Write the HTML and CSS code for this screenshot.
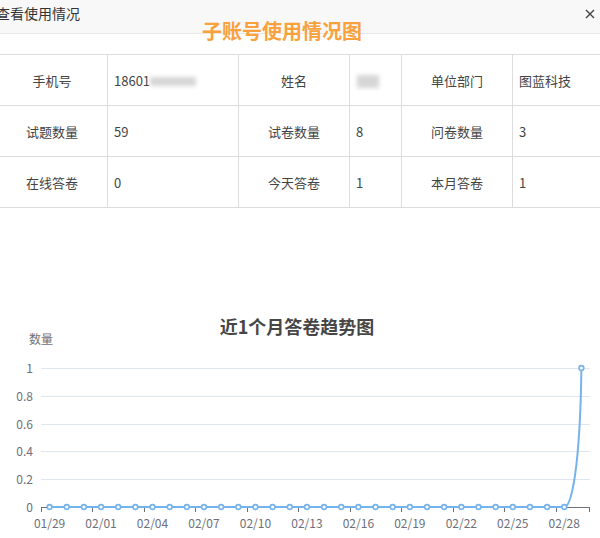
FILE: index.html
```html
<!DOCTYPE html>
<html lang="zh-CN">
<head>
    <meta charset="UTF-8">
    <title>查看使用情况</title>
    <link rel="stylesheet" href="styles.css">
</head>
<body>
    <div class="dialog">
        <div class="dialog-header">
            <span class="dialog-title">查看使用情况</span>
            <button class="close-btn" aria-label="关闭">
                <svg width="10" height="10" viewBox="0 0 10 10"><path d="M1 1 L9 9 M9 1 L1 9" stroke="#444" stroke-width="1.4" fill="none"/></svg>
            </button>
        </div>

        <h2 class="usage-title">子账号使用情况图</h2>

        <table class="usage-table">
            <colgroup>
                <col style="width:111px"><col style="width:131px"><col style="width:111px">
                <col style="width:52px"><col style="width:111px"><col style="width:88px">
            </colgroup>
            <tr>
                <td class="label">手机号</td>
                <td class="value">18601<span class="masked masked-phone"></span></td>
                <td class="label">姓名</td>
                <td class="value"><span class="masked masked-name"></span></td>
                <td class="label">单位部门</td>
                <td class="value">图蓝科技</td>
            </tr>
            <tr>
                <td class="label">试题数量</td>
                <td class="value">59</td>
                <td class="label">试卷数量</td>
                <td class="value">8</td>
                <td class="label">问卷数量</td>
                <td class="value">3</td>
            </tr>
            <tr>
                <td class="label">在线答卷</td>
                <td class="value">0</td>
                <td class="label">今天答卷</td>
                <td class="value">1</td>
                <td class="label">本月答卷</td>
                <td class="value">1</td>
            </tr>
        </table>

        <div class="chart">
            <svg id="trend" width="604" height="330" viewBox="-4 208 604 330"></svg>
        </div>
    </div>

    <script>
        (function () {
            // chart geometry (page coordinates)
            const svg = document.getElementById('trend');
            const NS = 'http://www.w3.org/2000/svg';
            const gridLeft = 41, gridRight = 590, gridTop = 368, gridBottom = 507;
            const values = [];
            for (let i = 0; i < 31; i++) values.push(0);
            values.push(1);

            // day labels 01/29 .. 03/01
            const labels = [];
            const start = new Date(2021, 0, 29);
            for (let i = 0; i < values.length; i++) {
                const d = new Date(start.getTime() + i * 86400000);
                labels.push(String(d.getMonth() + 1).padStart(2, '0') + '/' + String(d.getDate()).padStart(2, '0'));
            }

            const band = (gridRight - gridLeft) / values.length;
            const xOf = i => gridLeft + band * (i + 0.5);
            const yOf = v => gridBottom - (gridBottom - gridTop) * v;

            function el(name, attrs, text) {
                const node = document.createElementNS(NS, name);
                for (const k in attrs) node.setAttribute(k, attrs[k]);
                if (text !== undefined) node.textContent = text;
                svg.appendChild(node);
                return node;
            }

            el('text', { x: 297, y: 334, class: 'chart-title', 'text-anchor': 'middle' }, '近1个月答卷趋势图');
            el('text', { x: 41, y: 344, class: 'axis-name', 'text-anchor': 'middle' }, '数量');

            // grid + y labels
            for (let k = 0; k <= 5; k++) {
                const v = k / 5;
                const y = Math.round(yOf(v)) + 0.5;
                if (k > 0) el('line', { x1: gridLeft, x2: gridRight, y1: y, y2: y, class: 'grid' });
                el('text', { x: 33, y: y + 4, class: 'axis-label', 'text-anchor': 'end' }, k === 5 ? '1' : k === 0 ? '0' : v.toFixed(1));
            }

            // x axis
            el('line', { x1: gridLeft, x2: gridRight, y1: gridBottom + 0.5, y2: gridBottom + 0.5, class: 'axis' });
            for (let i = 0; i <= values.length; i += 3) {
                const x = Math.round(gridLeft + band * i) + 0.5;
                el('line', { x1: x, x2: x, y1: gridBottom, y2: gridBottom + 5, class: 'axis' });
            }
            el('line', { x1: gridRight - 0.5, x2: gridRight - 0.5, y1: gridBottom, y2: gridBottom + 5, class: 'axis' });
            for (let i = 0; i < values.length; i += 3) {
                el('text', { x: xOf(i), y: 528, class: 'axis-label', 'text-anchor': 'middle' }, labels[i]);
            }

            // series line (flat, then a smooth rise to the last point)
            const lastX = xOf(values.length - 1), prevX = xOf(values.length - 2);
            let d = 'M' + xOf(0) + ' ' + gridBottom + ' L' + prevX + ' ' + gridBottom;
            d += ' C' + (prevX + 7) + ' ' + gridBottom + ' ' + (lastX - 1.4) + ' ' + (gridBottom - 37) + ' ' + lastX + ' ' + gridTop;
            el('path', { d: d, class: 'series' });
            values.forEach((v, i) => {
                el('circle', { cx: xOf(i), cy: yOf(v), r: 2.4, class: 'dot' });
            });
        })();
    </script>
</body>
</html>
```

FILE: styles.css
```css
* {
    margin: 0;
    padding: 0;
    box-sizing: border-box;
}

body {
    background-color: #fff;
    color: #333;
    font-family: "Microsoft YaHei", "Noto Sans CJK SC", sans-serif;
    overflow: hidden;
}

/* Dialog */
.dialog {
    width: 604px;
    margin-left: -4px;
}

.dialog-header {
    display: flex;
    justify-content: space-between;
    align-items: flex-start;
    height: 34px;
    background-color: #f8f8f8;
    border-bottom: 1px solid #e8e8e8;
    padding: 3px 4px 0 0;
}

.dialog-title {
    font-size: 14px;
    line-height: 20px;
    color: #333;
}

.close-btn {
    border: none;
    background: none;
    width: 12px;
    height: 12px;
    margin-top: 5px;
    display: flex;
    align-items: center;
    justify-content: center;
    cursor: pointer;
}

/* Orange heading */
.usage-title {
    margin-top: -16px;
    padding-left: 206px;
    font-size: 20px;
    line-height: 26px;
    font-weight: bold;
    color: #f9a13c;
    margin-bottom: 10px;
}

/* Info table */
.usage-table {
    width: 604px;
    table-layout: fixed;
    border-collapse: collapse;
    font-size: 13px;
    color: #444;
}

.usage-table td {
    height: 51px;
    border: 1px solid #dcdcdc;
    white-space: nowrap;
    overflow: hidden;
}

.usage-table .label {
    text-align: center;
}

.usage-table .value {
    padding-left: 6px;
}

.masked {
    display: inline-block;
    vertical-align: middle;
    background-color: #d6d6d6;
    filter: blur(2px);
}

.masked-phone {
    width: 46px;
    height: 9px;
}

.masked-name {
    width: 22px;
    height: 13px;
    margin-left: 1px;
}

/* Chart */
.chart svg {
    display: block;
    font-family: "Microsoft YaHei", "Noto Sans CJK SC", sans-serif;
}

.chart-title {
    font-size: 18px;
    font-weight: bold;
    fill: #464646;
}

.axis-name,
.axis-label {
    font-size: 12px;
    fill: #6e7079;
}

.grid {
    stroke: #e0e6f1;
    stroke-width: 1;
}

.axis {
    stroke: #6e7079;
    stroke-width: 1;
}

.series {
    fill: none;
    stroke: #75b3ec;
    stroke-width: 2;
}

.dot {
    fill: #fff;
    stroke: #75b3ec;
    stroke-width: 1.6;
}
```
